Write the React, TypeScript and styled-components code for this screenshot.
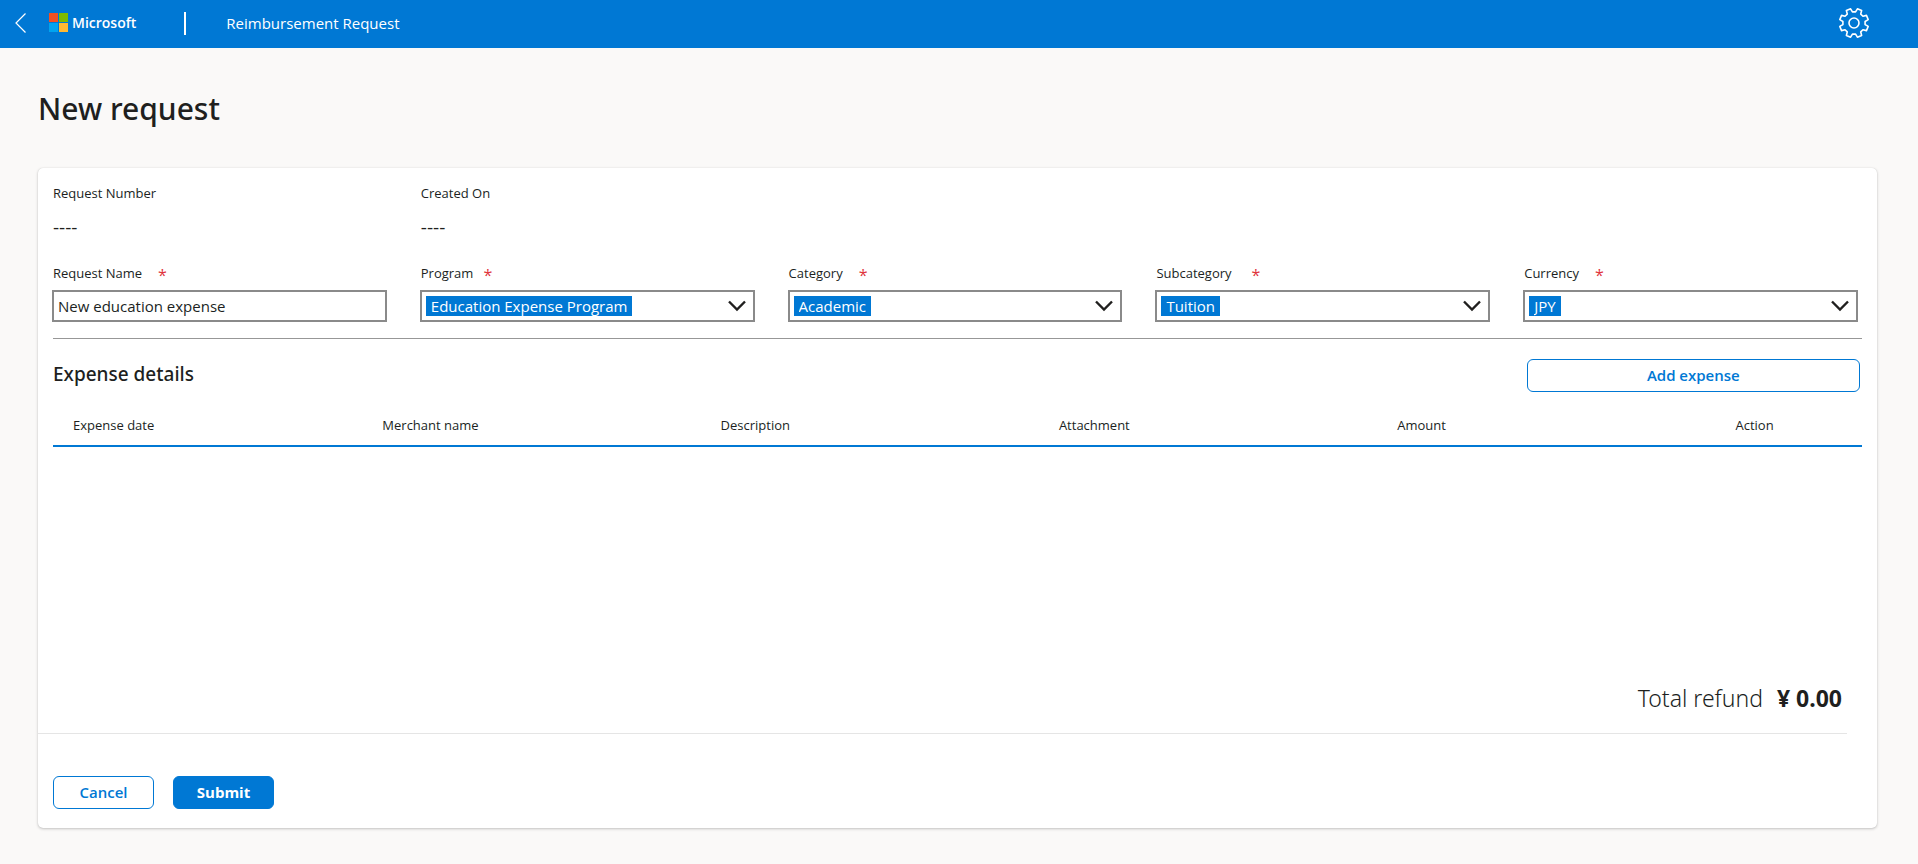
import React from 'react';
import styled, { createGlobalStyle } from 'styled-components';

const blue = '#0078d4';
const ink = '#201f1e';
const headingFont = "'Noto Sans', 'Open Sans', sans-serif";

const GlobalStyle = createGlobalStyle`
  *, *::before, *::after { box-sizing: border-box; }
  body {
    margin: 0;
    background: #faf9f8;
    color: ${ink};
    font-family: 'Open Sans', 'Noto Sans', sans-serif;
    font-size: 15px;
  }
  button, input, select { font: inherit; color: inherit; }
`;

const TopBar = styled.header`
  display: flex;
  align-items: center;
  height: 48px;
  padding: 0 48px 2px 12px;
  background: ${blue};
  color: #fff;
`;

const IconButton = styled.button`
  display: flex;
  padding: 0;
  border: 0;
  background: none;
  color: #fff;
  cursor: pointer;
`;

const Brand = styled.a`
  display: flex;
  align-items: center;
  gap: 3px;
  margin-left: 21px;
  color: #fff;
  font-size: 14px;
  font-weight: 600;
  line-height: 20px;
  text-decoration: none;
`;

const BarRule = styled.span`
  width: 2px;
  height: 23px;
  margin: 0 40px 0 48px;
  background: #fff;
`;

const AppName = styled.span`
  flex: 1;
  font-size: 15px;
  line-height: 20px;
`;

const PageTitle = styled.h1`
  margin: 0;
  padding: 41px 38px 39px;
  font-family: ${headingFont};
  font-size: 30px;
  font-weight: 500;
  line-height: 40px;
`;

const Card = styled.section`
  margin: 0 41px 36px 38px;
  padding: 15px 0 19px;
  border-radius: 5px;
  background: #fff;
  box-shadow: 0 1px 3px rgba(0, 0, 0, 0.22), 0 0 1px rgba(0, 0, 0, 0.15);
`;

const FieldGrid = styled.div`
  display: grid;
  grid-template-columns: repeat(5, 1fr);
  column-gap: 33px;
  margin: 0 19px 0 14px;
`;

const Meta = styled.dl`
  margin: 0 0 24px;
  padding-left: 1px;
`;

const MetaName = styled.dt`
  font-size: 13px;
  font-weight: 500;
  line-height: 20px;
`;

const MetaValue = styled.dd`
  margin: 12px 0 0;
  font-size: 19px;
  line-height: 24px;
`;

const FieldLabel = styled.label<{ $gap: number }>`
  display: flex;
  gap: ${(p) => p.$gap}px;
  margin-bottom: 7px;
  padding-left: 1px;
  font-size: 13px;
  font-weight: 500;
  line-height: 20px;
`;

const Required = styled.span`
  height: 20px;
  color: #e0343c;
  font-size: 16px;
  font-weight: 400;
  line-height: 24px;
`;

const Control = styled.div`
  display: flex;
  align-items: center;
  justify-content: space-between;
  height: 32px;
  padding: 0 7px 0 4px;
  border: 2px solid #8a8a8a;
`;

const TextInput = styled.input`
  width: 100%;
  height: 28px;
  padding: 0;
  border: 0;
  outline: 0;
  background: none;
  font-size: 15px;
`;

const ChipSelect = styled.select`
  appearance: none;
  field-sizing: content;
  height: 20px;
  padding: 0 5px;
  border: 0;
  border-radius: 0;
  background: ${blue};
  color: #fff;
  font-size: 15px;
  line-height: 20px;
`;

const Divider = styled.hr`
  height: 1px;
  margin: 16px 15px 20px;
  border: 0;
  background: #979797;
`;

const SectionHead = styled.div`
  display: flex;
  justify-content: space-between;
  margin: 0 17px 14px 15px;
`;

const SectionTitle = styled.h2`
  margin: 0;
  font-family: ${headingFont};
  font-size: 19px;
  font-weight: 500;
  line-height: 30px;
`;

const Button = styled.button<{ $solid?: boolean; $wide?: boolean }>`
  width: ${(p) => (p.$wide ? '18.45%' : '101px')};
  height: 33px;
  padding: 0 0 1px;
  border: 1px solid ${blue};
  border-radius: 6px;
  background: ${(p) => (p.$solid ? blue : '#fff')};
  color: ${(p) => (p.$solid ? '#fff' : blue)};
  font-size: 15px;
  font-weight: ${(p) => (p.$solid ? 700 : 600)};
  line-height: 20px;
  cursor: pointer;
`;

const TableArea = styled.div`
  min-height: 276px;
  padding: 0 15px;
`;

const Table = styled.table`
  width: 100%;
  table-layout: fixed;
  border-collapse: collapse;
  border-bottom: 2px solid ${blue};
`;

const HeadCell = styled.th<{ $width: string }>`
  width: ${(p) => p.$width};
  height: 40px;
  padding: 0 0 1px 20px;
  font-size: 13px;
  font-weight: 500;
  line-height: 20px;
  text-align: left;
`;

const Total = styled.p`
  display: flex;
  justify-content: flex-end;
  gap: 14px;
  margin: 0 30px 0 0;
  padding: 0 5px 19px;
  border-bottom: 1px solid #e5e5e5;
  font-family: ${headingFont};
  font-size: 23px;
  font-weight: 300;
  line-height: 32px;
`;

const Amount = styled.strong`
  font-weight: 700;
`;

const Actions = styled.div`
  display: flex;
  gap: 19px;
  margin: 42px 15px 0;
`;

const ChevronDown = () => (
  <svg width="18" height="12" viewBox="0 0 18 12" fill="none" stroke={ink} strokeWidth="2.4" aria-hidden="true">
    <path d="M1 1.5 9 9.5 17 1.5" />
  </svg>
);

const BackIcon = () => (
  <svg width="16" height="22" viewBox="0 0 16 22" fill="none" stroke="currentColor" strokeWidth="1.2">
    <path d="M13.5 1.5 4 11 13.5 20.5" />
  </svg>
);

const FourSquares = () => (
  <svg width="20" height="20" viewBox="0 0 20 20" aria-hidden="true">
    <path fill="#f25022" d="M0 0h9v9H0z" />
    <path fill="#7fba00" d="M10 0h9v9h-9z" />
    <path fill="#00a4ef" d="M0 10h9v9H0z" />
    <path fill="#ffb932" d="M10 10h9v9h-9z" />
  </svg>
);

const polar = (radius: number, degrees: number) => {
  const a = (degrees * Math.PI) / 180;
  return `${(16 + radius * Math.sin(a)).toFixed(2)},${(16 - radius * Math.cos(a)).toFixed(2)}`;
};

const gearOutline = Array.from({ length: 8 }, (_, i) => 22.5 + i * 45)
  .flatMap((c) => [polar(11.2, c - 14.5), polar(14.6, c - 9), polar(14.6, c + 9), polar(11.2, c + 14.5)])
  .join(' ');

const GearIcon = () => (
  <svg width="32" height="32" viewBox="0 0 32 32" fill="none" stroke="currentColor" strokeWidth="1.6" strokeLinejoin="round">
    <polygon points={gearOutline} />
    <circle cx="16" cy="16" r="5" />
  </svg>
);

const fields = [
  { id: 'program', label: 'Program', value: 'Education Expense Program', gap: 10 },
  { id: 'category', label: 'Category', value: 'Academic', gap: 16 },
  { id: 'subcategory', label: 'Subcategory', value: 'Tuition', gap: 20 },
  { id: 'currency', label: 'Currency', value: 'JPY', gap: 16 },
];

const columns = [
  ['Expense date', '17.1%'],
  ['Merchant name', '18.7%'],
  ['Description', '18.7%'],
  ['Attachment', '18.7%'],
  ['Amount', '18.7%'],
  ['Action', '8.1%'],
];

export default function App() {
  return (
    <>
      <GlobalStyle />
      <TopBar>
        <IconButton type="button" aria-label="Back">
          <BackIcon />
        </IconButton>
        <Brand href="#">
          <FourSquares />
          Microsoft
        </Brand>
        <BarRule />
        <AppName>Reimbursement Request</AppName>
        <IconButton type="button" aria-label="Settings">
          <GearIcon />
        </IconButton>
      </TopBar>
      <main>
        <PageTitle>New request</PageTitle>
        <Card>
          <FieldGrid>
            <Meta>
              <MetaName>Request Number</MetaName>
              <MetaValue>----</MetaValue>
            </Meta>
            <Meta>
              <MetaName>Created On</MetaName>
              <MetaValue>----</MetaValue>
            </Meta>
          </FieldGrid>
          <FieldGrid>
            <div>
              <FieldLabel htmlFor="name" $gap={16}>
                Request Name <Required>*</Required>
              </FieldLabel>
              <Control>
                <TextInput id="name" defaultValue="New education expense" />
              </Control>
            </div>
            {fields.map((f) => (
              <div key={f.id}>
                <FieldLabel htmlFor={f.id} $gap={f.gap}>
                  {f.label} <Required>*</Required>
                </FieldLabel>
                <Control>
                  <ChipSelect id={f.id}>
                    <option>{f.value}</option>
                  </ChipSelect>
                  <ChevronDown />
                </Control>
              </div>
            ))}
          </FieldGrid>
          <Divider />
          <SectionHead>
            <SectionTitle>Expense details</SectionTitle>
            <Button type="button" $wide>
              Add expense
            </Button>
          </SectionHead>
          <TableArea>
            <Table>
              <thead>
                <tr>
                  {columns.map(([name, width]) => (
                    <HeadCell key={name} scope="col" $width={width}>
                      {name}
                    </HeadCell>
                  ))}
                </tr>
              </thead>
            </Table>
          </TableArea>
          <Total>
            Total refund <Amount>¥ 0.00</Amount>
          </Total>
          <Actions>
            <Button type="button">Cancel</Button>
            <Button type="submit" $solid>
              Submit
            </Button>
          </Actions>
        </Card>
      </main>
    </>
  );
}
